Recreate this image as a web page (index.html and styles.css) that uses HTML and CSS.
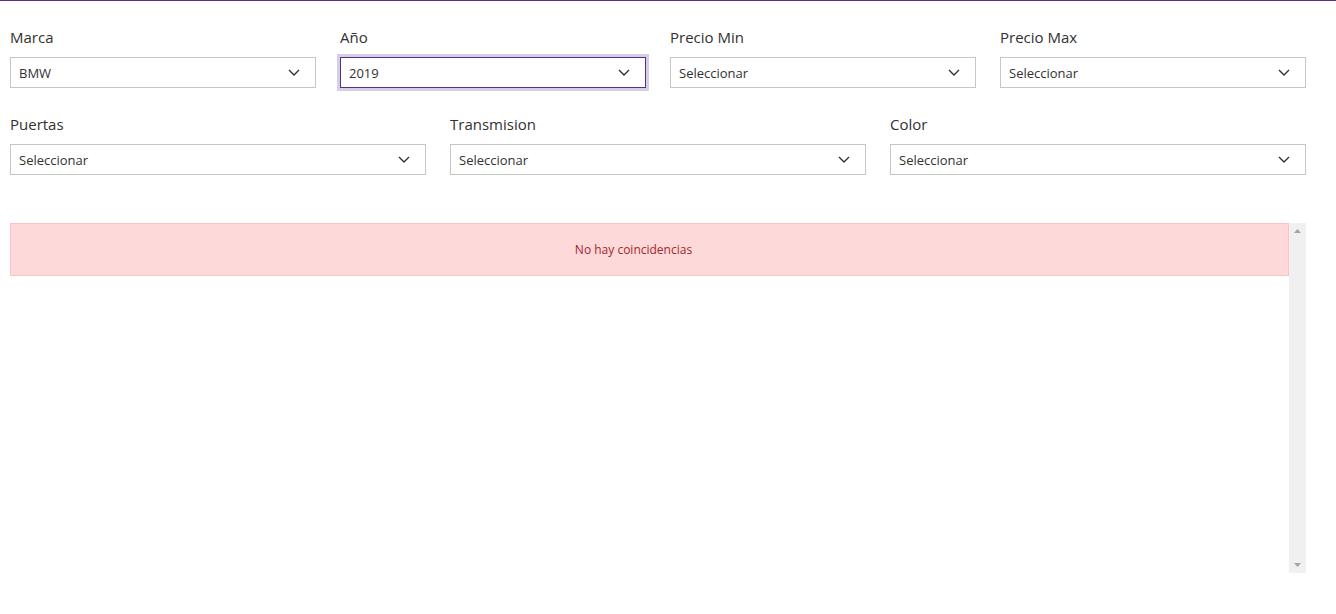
FILE: index.html
```html
<!DOCTYPE html>
<html lang="es">
<head>
    <meta charset="UTF-8">
    <meta name="viewport" content="width=device-width, initial-scale=1.0">
    <title>Buscar autos</title>
    <link rel="stylesheet" href="styles.css">
</head>
<body>
    <div class="top-line"></div>

    <div class="filters">
        <div class="row row-4">
            <div class="field">
                <label>Marca</label>
                <div class="dropdown"><span>BMW</span><svg class="chev" viewBox="0 0 12 7"><path d="M1 1l5 5 5-5"/></svg></div>
            </div>
            <div class="field">
                <label>Año</label>
                <div class="dropdown focused"><span>2019</span><svg class="chev" viewBox="0 0 12 7"><path d="M1 1l5 5 5-5"/></svg></div>
            </div>
            <div class="field">
                <label>Precio Min</label>
                <div class="dropdown"><span>Seleccionar</span><svg class="chev" viewBox="0 0 12 7"><path d="M1 1l5 5 5-5"/></svg></div>
            </div>
            <div class="field">
                <label>Precio Max</label>
                <div class="dropdown"><span>Seleccionar</span><svg class="chev" viewBox="0 0 12 7"><path d="M1 1l5 5 5-5"/></svg></div>
            </div>
        </div>

        <div class="row row-3">
            <div class="field">
                <label>Puertas</label>
                <div class="dropdown"><span>Seleccionar</span><svg class="chev" viewBox="0 0 12 7"><path d="M1 1l5 5 5-5"/></svg></div>
            </div>
            <div class="field">
                <label>Transmision</label>
                <div class="dropdown"><span>Seleccionar</span><svg class="chev" viewBox="0 0 12 7"><path d="M1 1l5 5 5-5"/></svg></div>
            </div>
            <div class="field">
                <label>Color</label>
                <div class="dropdown"><span>Seleccionar</span><svg class="chev" viewBox="0 0 12 7"><path d="M1 1l5 5 5-5"/></svg></div>
            </div>
        </div>
    </div>

    <div class="results">
        <div class="results-body">
            <div class="no-match">No hay coincidencias</div>
        </div>
        <div class="scrollbar">
            <svg class="arrow" viewBox="0 0 7 4"><path d="M3.5 0L7 4H0z"/></svg>
            <svg class="arrow" viewBox="0 0 7 4"><path d="M0 0h7L3.5 4z"/></svg>
        </div>
    </div>
</body>
</html>
```

FILE: styles.css
```css
* {
    margin: 0;
    padding: 0;
    box-sizing: border-box;
}

body {
    font-family: 'Open Sans', 'Noto Sans', sans-serif;
    background: #fff;
    color: #323130;
}

.top-line {
    height: 1px;
    background: #5c2d91;
}

.filters {
    padding: 0 30px 0 10px;
}

.row {
    display: grid;
    gap: 24px;
}

.row-4 {
    grid-template-columns: repeat(4, 1fr);
    margin-top: 25px;
}

.row-3 {
    grid-template-columns: repeat(3, 1fr);
    margin-top: 25px;
}

label {
    display: block;
    font-size: 15px;
    line-height: 22px;
    margin-bottom: 9px;
    color: #323130;
}

.dropdown {
    height: 31px;
    border: 1px solid #c8c6c4;
    display: flex;
    align-items: center;
    justify-content: space-between;
    padding: 0 15px 0 8px;
    font-size: 13px;
    color: #323130;
}

.dropdown.focused {
    border-color: #5c2d91;
    box-shadow: 0 0 0 3px #d6cfe4;
}

.chev {
    width: 12px;
    height: 7px;
    fill: none;
    stroke: #323130;
    stroke-width: 1.4;
}

.results {
    margin: 48px 30px 0 10px;
    height: 350px;
    display: flex;
}

.results-body {
    flex: 1;
}

.no-match {
    height: 53px;
    background: #fed9d9;
    border: 1px solid #fbc3c3;
    color: #a4262c;
    font-size: 12px;
    display: flex;
    align-items: center;
    justify-content: center;
    padding-right: 32px;
}

.scrollbar {
    width: 17px;
    background: #f0f0f0;
    display: flex;
    flex-direction: column;
    justify-content: space-between;
    align-items: center;
    padding: 6px 0;
}

.arrow {
    width: 7px;
    height: 4px;
    fill: #a3a3a3;
}
```
